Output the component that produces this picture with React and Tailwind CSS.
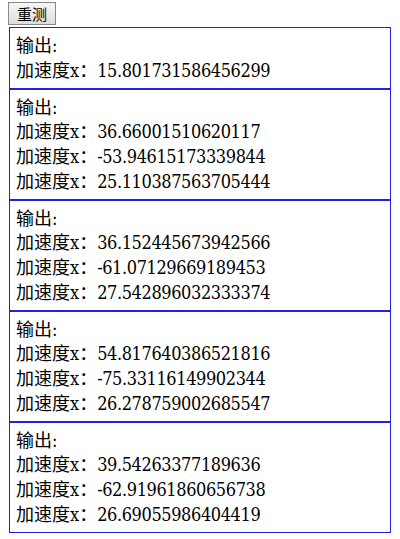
const results = [
  ["15.801731586456299"],
  ["36.66001510620117", "-53.94615173339844", "25.110387563705444"],
  ["36.152445673942566", "-61.07129669189453", "27.542896032333374"],
  ["54.817640386521816", "-75.33116149902344", "26.278759002685547"],
  ["39.54263377189636", "-62.91961860656738", "26.69055986404419"],
];

export default function App() {
  return (
    <div className="bg-white px-2 pt-[2px] text-black" style={{ fontFamily: '"DejaVu Serif Condensed", "DejaVu Serif", "Noto Sans CJK SC", serif' }}>
      <button className="h-[23px] border border-[#8a8a8a] bg-gradient-to-b from-[#f6f6f6] to-[#dedede] px-[8px] text-[15px] leading-none" style={{ fontFamily: '"Noto Sans CJK SC", sans-serif' }}>
        重测
      </button>
      <div className="mx-[1px]">
        {results.map((rows, i) => (
          <div key={i} className="border border-[#2222dd] px-[6px] pt-[6px] pb-[4px] text-[18px] leading-[24.75px]">
            <div>输出:</div>
            {rows.map((v, j) => (
              <div key={j}>
                加速度x：<span className="tracking-[-0.4px]">{v}</span>
              </div>
            ))}
          </div>
        ))}
      </div>
    </div>
  );
}
